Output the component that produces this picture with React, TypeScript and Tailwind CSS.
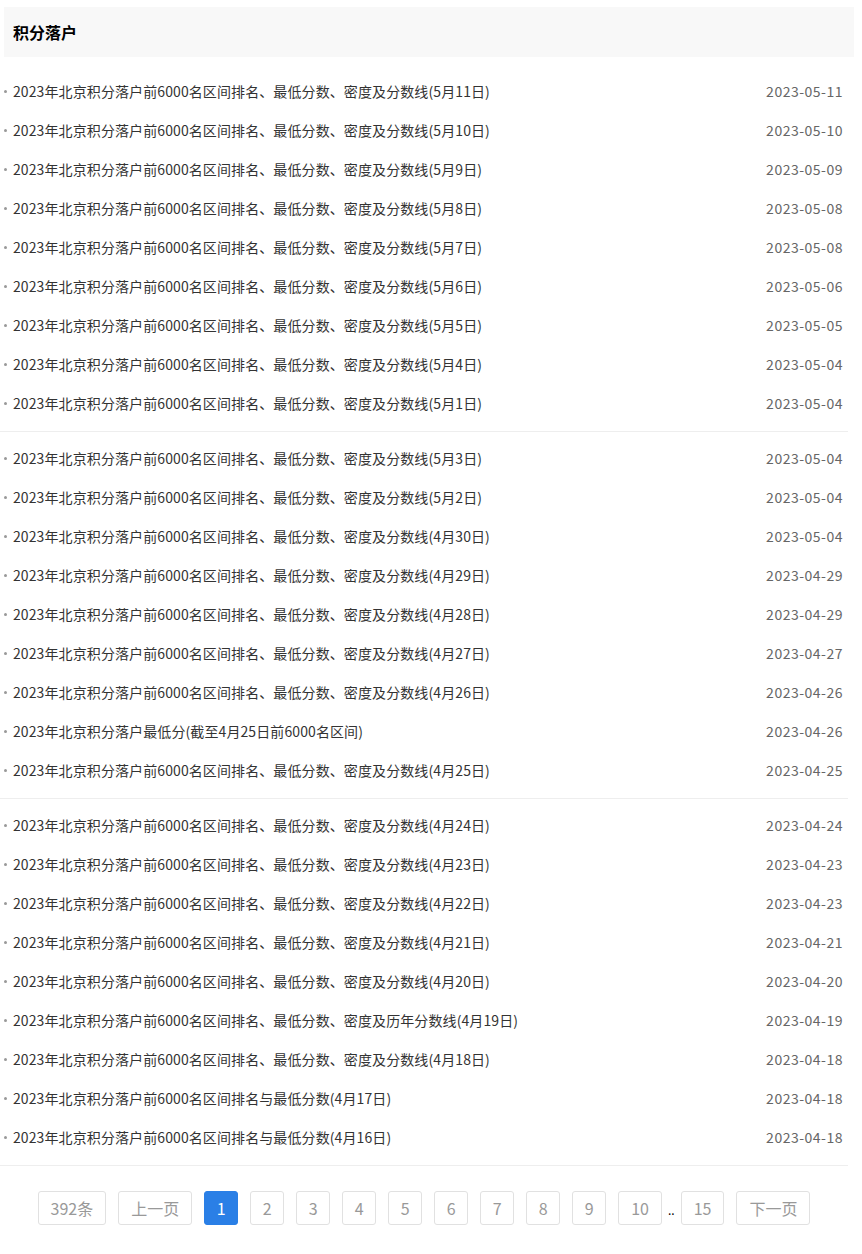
const FONT = { fontFamily: '"Microsoft YaHei", "Noto Sans CJK SC", sans-serif' };

type Item = { title: string; date: string };

const base = '2023年北京积分落户前6000名区间排名、最低分数、密度及分数线';

const groups: Item[][] = [
    [
        { title: `${base}(5月11日)`, date: '2023-05-11' },
        { title: `${base}(5月10日)`, date: '2023-05-10' },
        { title: `${base}(5月9日)`, date: '2023-05-09' },
        { title: `${base}(5月8日)`, date: '2023-05-08' },
        { title: `${base}(5月7日)`, date: '2023-05-08' },
        { title: `${base}(5月6日)`, date: '2023-05-06' },
        { title: `${base}(5月5日)`, date: '2023-05-05' },
        { title: `${base}(5月4日)`, date: '2023-05-04' },
        { title: `${base}(5月1日)`, date: '2023-05-04' },
    ],
    [
        { title: `${base}(5月3日)`, date: '2023-05-04' },
        { title: `${base}(5月2日)`, date: '2023-05-04' },
        { title: `${base}(4月30日)`, date: '2023-05-04' },
        { title: `${base}(4月29日)`, date: '2023-04-29' },
        { title: `${base}(4月28日)`, date: '2023-04-29' },
        { title: `${base}(4月27日)`, date: '2023-04-27' },
        { title: `${base}(4月26日)`, date: '2023-04-26' },
        { title: '2023年北京积分落户最低分(截至4月25日前6000名区间)', date: '2023-04-26' },
        { title: `${base}(4月25日)`, date: '2023-04-25' },
    ],
    [
        { title: `${base}(4月24日)`, date: '2023-04-24' },
        { title: `${base}(4月23日)`, date: '2023-04-23' },
        { title: `${base}(4月22日)`, date: '2023-04-23' },
        { title: `${base}(4月21日)`, date: '2023-04-21' },
        { title: `${base}(4月20日)`, date: '2023-04-20' },
        { title: '2023年北京积分落户前6000名区间排名、最低分数、密度及历年分数线(4月19日)', date: '2023-04-19' },
        { title: `${base}(4月18日)`, date: '2023-04-18' },
        { title: '2023年北京积分落户前6000名区间排名与最低分数(4月17日)', date: '2023-04-18' },
        { title: '2023年北京积分落户前6000名区间排名与最低分数(4月16日)', date: '2023-04-18' },
    ],
];

const pages = ['1', '2', '3', '4', '5', '6', '7', '8', '9', '10'];

function PageButton({ children, active, narrow }: { children: React.ReactNode; active?: boolean; narrow?: boolean }) {
    const size = narrow ? 'w-[34px]' : 'px-[12px]';
    return (
        <a
            className={
                active
                    ? `mx-[6px] h-[34px] ${size} flex items-center justify-center rounded-[3px] border border-[#2a7fe6] bg-[#2a7fe6] text-white text-base`
                    : `mx-[6px] h-[34px] ${size} flex items-center justify-center rounded-[3px] border border-[#e1e1e1] bg-white text-[#999] text-base`
            }
        >
            {children}
        </a>
    );
}

export default function App() {
    return (
        <div className="bg-white pt-[7px] pb-[29px]" style={FONT}>
            {/* Header */}
            <div className="ml-[4px] w-[850px] h-[50px] bg-[#f8f8f8] flex items-center pl-[9px] mb-[8px]">
                <h2 className="text-base font-bold text-black">积分落户</h2>
            </div>

            {/* Lists */}
            <div className="w-[848px]">
                {groups.map((items, gi) => (
                    <ul key={gi} className="pt-[6px] pb-[9px] border-b border-[#eee]">
                        {items.map((it, i) => (
                            <li key={i} className="h-[39px] flex items-center justify-between pl-[4px] pr-[5px] text-sm tracking-[0.1px]">
                                <div className="flex items-center">
                                    <span className="w-[3px] h-[3px] rounded-full bg-[#999] mr-[6px] mt-[1px]" />
                                    <span className="text-[#333]">{it.title}</span>
                                </div>
                                <span className="text-[#666] tracking-[0.5px]">{it.date}</span>
                            </li>
                        ))}
                    </ul>
                ))}
            </div>

            {/* Pagination */}
            <div className="w-[848px] mt-[25px] flex items-center justify-center">
                <PageButton>392条</PageButton>
                <PageButton>上一页</PageButton>
                {pages.map((p) => (
                    <PageButton key={p} active={p === '1'} narrow={p.length === 1}>
                        {p}
                    </PageButton>
                ))}
                <span className="text-xs text-black self-end mb-[7px]">..</span>
                <PageButton>15</PageButton>
                <PageButton>下一页</PageButton>
            </div>
        </div>
    );
}
